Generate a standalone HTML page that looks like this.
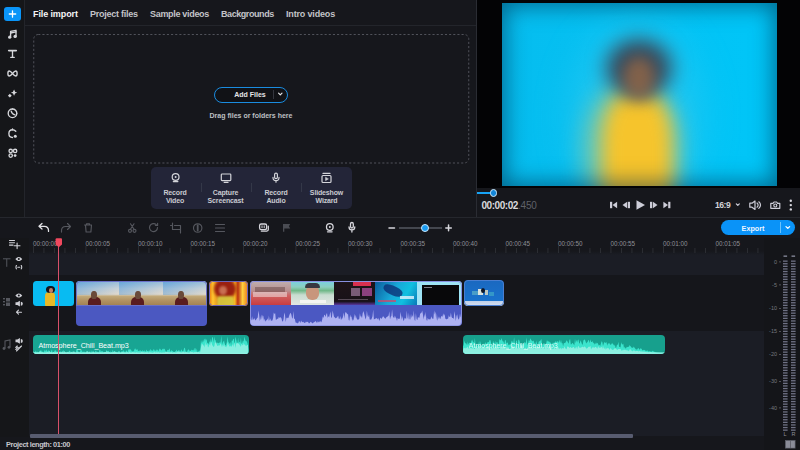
<!DOCTYPE html>
<html><head><meta charset="utf-8">
<style>
*{margin:0;padding:0;box-sizing:border-box}
html,body{width:800px;height:450px;overflow:hidden;background:#16171c;font-family:"Liberation Sans",sans-serif;color:#d8d8da}
.a{position:absolute}
svg{position:absolute;overflow:visible}
.tab{position:absolute;top:9px;font-size:9px;font-weight:bold;color:#c3c4c8;white-space:nowrap}
.rec{position:absolute;top:188.5px;font-size:7px;color:#c9cad0;text-align:center;line-height:8px;width:50px;font-weight:bold;letter-spacing:-0.15px}
.rl{position:absolute;top:240px;font-size:6.3px;color:#8e9098;white-space:nowrap}
.db{position:absolute;font-size:5.5px;color:#76787f;width:14px;text-align:right;left:763px}
</style></head><body>

<div class="a" style="left:0;top:0;width:24px;height:217px;background:#151619"></div>
<div class="a" style="left:24px;top:0;width:1px;height:217px;background:#23252b"></div>
<div class="a" style="left:4px;top:7px;width:17px;height:14px;border-radius:3px;background:#0a95f8"></div>
<svg style="left:0;top:0" width="25" height="217">
<g stroke="#fff" stroke-width="1.3" fill="none" stroke-linecap="round"><path d="M12.5 10.8v6.4M9.3 14h6.4"/></g>
<g fill="none" stroke="#d6d7db" stroke-width="1.35" stroke-linecap="round" stroke-linejoin="round">
 <path d="M10.6 37.2V31.4l5.4-1.1v6.2"/><path d="M10.6 33l5.4-1.1"/>
 <path d="M8.7 50.6h7.6" stroke-width="1.6"/><path d="M12.5 50.6v6.8M10.8 57.4h3.4"/>
 <path d="M12.5 73.5c-1.3-1.6-2.4-2.5-3.2-2.5-.9 0-1.4 1-1.4 2.5s.5 2.5 1.4 2.5c.8 0 1.9-.9 3.2-2.5c1.3-1.6 2.4-2.5 3.2-2.5.9 0 1.4 1 1.4 2.5s-.5 2.5-1.4 2.5c-.8 0-1.9-.9-3.2-2.5z"/>
 <path d="M16.8 113.3a4.3 4.3 0 1 1-4.3-4.3"/><path d="M12.5 109c2.3 0 4.3 2 4.3 4.3"/><path d="M11.2 111.2c.4 2 1.8 3.3 3.8 3.6"/>
 <path d="M15.8 131.3c-.9-1-2-1.6-3.3-1.6-2.3 0-3.6 1.8-3.6 3.9s1.3 3.9 3.6 3.9"/><path d="M12.5 129.7v-.8"/>
 <circle cx="10.7" cy="150.9" r="1.7"/><circle cx="15.1" cy="150.9" r="1.7"/><circle cx="10.7" cy="155.6" r="1.7"/>
</g>
<g fill="#d6d7db">
 <circle cx="9.7" cy="37.2" r="1.6"/><circle cx="15.1" cy="36.4" r="1.6"/>
 <path d="M14.06 89.4Q14.5 92.1 17.2 92.56Q14.5 93 14.06 95.7Q13.6 93 10.9 92.56Q13.6 92.1 14.06 89.4z"/>
 <path d="M9.84 93.8l1.9 1.9-1.9 1.9-1.9-1.9z"/>
 <circle cx="15.3" cy="136.2" r="1.5"/><circle cx="15.1" cy="155.6" r="1.4"/>
</g>
</svg>
<div class="a" style="left:25px;top:25px;width:451px;height:1px;background:#23252b"></div>
<div class="tab" style="left:33px;color:#f4f4f6;letter-spacing:-0.11px">File import</div>
<div class="tab" style="left:90px;letter-spacing:-0.25px">Project files</div>
<div class="tab" style="left:150px;letter-spacing:-0.31px">Sample videos</div>
<div class="tab" style="left:221px;letter-spacing:-0.43px">Backgrounds</div>
<div class="tab" style="left:286px;letter-spacing:-0.17px">Intro videos</div>
<svg style="left:0;top:0" width="1" height="1"><rect x="33.75" y="34.5" width="435" height="128.5" rx="4.5" fill="none" stroke="#50525a" stroke-width="1" stroke-dasharray="2.1 2.05"/></svg>
<div class="a" style="left:214px;top:87px;width:74px;height:15.5px;border:1.8px solid #1a8ce0;border-radius:8px;background:#111216"></div>
<div class="a" style="left:221px;top:90.6px;width:58px;font-size:7px;font-weight:bold;color:#e6e6e8;text-align:center">Add Files</div>
<div class="a" style="left:273px;top:90px;width:1px;height:9px;background:#34363e"></div>
<svg style="left:0;top:0" width="1" height="1"><path d="M278.6 93.2l1.7 1.7 1.7-1.7" fill="none" stroke="#e6e6e8" stroke-width="1.2" stroke-linecap="round" stroke-linejoin="round"/></svg>
<div class="a" style="left:195px;top:112px;width:112px;font-size:7px;font-weight:bold;color:#bfc0c4;text-align:center">Drag files or folders here</div>
<div class="a" style="left:150.5px;top:166.8px;width:201.5px;height:42px;border-radius:5px;background:#232538"></div>
<div class="a" style="left:201px;top:183px;width:1px;height:9px;background:#343848"></div>
<div class="a" style="left:251px;top:183px;width:1px;height:9px;background:#343848"></div>
<div class="a" style="left:301px;top:183px;width:1px;height:9px;background:#343848"></div>
<div class="rec" style="left:150px">Record<br>Video</div>
<div class="rec" style="left:200.5px">Capture<br>Screencast</div>
<div class="rec" style="left:251px">Record<br>Audio</div>
<div class="rec" style="left:301.5px">Slideshow<br>Wizard</div>
<svg style="left:0;top:0" width="1" height="1"><g fill="none" stroke="#d4d5da" stroke-width="1.2" stroke-linecap="round" stroke-linejoin="round">
<circle cx="175.6" cy="177" r="3.4"/><path d="M173.3 181.6h4.6"/>
<rect x="221.3" y="174" width="9.5" height="6.6" rx="0.8"/><path d="M224.2 182.4h3.8"/>
<rect x="274.6" y="173.2" width="2.8" height="5.4" rx="1.4"/><path d="M273 177.4c0 2 1.4 3.2 3 3.2s3-1.2 3-3.2M276 180.6v1.6"/>
<rect x="322" y="175.5" width="9" height="7" rx="1"/><path d="M323 173.4h7"/><path d="M325.6 177.6v3l2.5-1.5z" fill="#d4d5da" stroke-width="0.6"/>
</g><circle cx="175.6" cy="177" r="1" fill="#d4d5da"/></svg>
<div class="a" style="left:476px;top:0;width:1px;height:217px;background:#2a2c33"></div>
<div class="a" style="left:477px;top:0;width:323px;height:188px;background:#030305"></div>
<div class="a" style="left:502px;top:3px;width:275px;height:183px;overflow:hidden;background:#03b9ec">
 <div class="a" style="left:0;top:0;width:275px;height:183px;background:linear-gradient(90deg,#06bdef 0%,#04c0f2 35%,#02c3f5 65%,#00c6f8 100%)"></div>
 <div class="a" style="left:70px;top:20px;width:130px;height:190px;border-radius:50%;background:#30c8f0;filter:blur(18px);opacity:.6"></div>
 <div class="a" style="left:80px;top:80px;width:100px;height:140px;border-radius:45%;background:#78c8a8;filter:blur(11px);opacity:.85"></div>
 <div class="a" style="left:100px;top:88px;width:70px;height:125px;border-radius:40% 40% 30% 30%;background:#f6c42c;filter:blur(9px)"></div>
 <div class="a" style="left:104px;top:36px;width:66px;height:58px;border-radius:50%;background:#38485a;filter:blur(10px)"></div>
 <div class="a" style="left:121px;top:54px;width:32px;height:42px;border-radius:50%;background:#8a6448;filter:blur(7px);opacity:.9"></div>
 <div class="a" style="left:0;top:0;width:275px;height:183px;box-shadow:inset 0 0 22px 3px rgba(0,45,75,.6)"></div>
</div>
<div class="a" style="left:477px;top:191.8px;width:16px;height:2px;background:#17a3f5"></div>
<div class="a" style="left:489.7px;top:189px;width:7.5px;height:7.5px;border-radius:50%;background:#1487d9;border:1.3px solid #cfe9fb"></div>
<div class="a" style="left:481.5px;top:199.5px;font-size:10px;font-weight:bold;color:#d9d9dd;letter-spacing:-0.45px">00:00:02<span style="color:#5f6168;font-weight:normal;letter-spacing:-0.2px">.450</span></div>
<svg style="left:0;top:0" width="1" height="1"><g fill="#cdcdd8">
<rect x="610" y="201.8" width="2.2" height="6.4"/><path d="M612.5 205l4.6-3.2v6.4z"/>
<path d="M622.5 205l4.6-3.2v6.4z"/><rect x="627.8" y="201.8" width="2.2" height="6.4"/>
<path d="M636.5 200.3l8.5 4.7-8.5 4.7z"/>
<rect x="650" y="201.8" width="2.2" height="6.4"/><path d="M657.5 205l-4.6-3.2v6.4z"/>
<path d="M668 205l-4.6-3.2v6.4z"/><rect x="668.2" y="201.8" width="2.2" height="6.4"/>
</g>
<g fill="none" stroke="#cdcdd8" stroke-width="1.2" stroke-linecap="round" stroke-linejoin="round">
<path d="M736.3 203.8l1.5 1.5 1.5-1.5"/>
<path d="M749.8 203.2h2.2l3-2.2v8.4l-3-2.2h-2.2z"/><path d="M757 203c.8.6 1.1 1.3 1.1 2.1s-.3 1.5-1.1 2.1M758.8 201.8c1.2 1 1.7 2.1 1.7 3.3s-.5 2.3-1.7 3.3"/>
<path d="M770.8 203.3h2.2l1-1.3h2.6l1 1.3h2.2v5h-9z"/><circle cx="775.3" cy="205.5" r="1.5"/>
</g>
<g fill="#d8d8e0"><circle cx="790.8" cy="200.8" r="1.2"/><circle cx="790.8" cy="205.1" r="1.2"/><circle cx="790.8" cy="209.4" r="1.2"/></g>
</svg>
<div class="a" style="left:715px;top:200.3px;font-size:8.6px;font-weight:bold;color:#d2d2d8;letter-spacing:-0.5px">16:9</div>
<div class="a" style="left:0;top:217px;width:800px;height:1px;background:#25272d"></div>
<svg style="left:0;top:0" width="1" height="1"><g fill="none" stroke-width="1.3" stroke-linecap="round" stroke-linejoin="round">
<g stroke="#e2e2e6"><path d="M39 226.3l3-2.8M39 226.3l3 2.8M39.5 226.3h4.8c2.5 0 4.2 1.8 4.2 4.3v.8"/></g>
<g stroke="#55575e" stroke-width="1.15"><path d="M70.5 226.5l-3-3M70.5 226.5l-3 3M70 226.5h-4.5c-2.5 0-4 1.8-4 4.3v1.3"/>
<path d="M84.5 225h7M86.5 225v-1.3h3v1.3M85.5 225l.6 7h4.8l.6-7"/>
<circle cx="130" cy="230.8" r="1.5"/><circle cx="134.5" cy="230.8" r="1.5"/><path d="M130.5 229.3l3.5-5.5M134 229.3l-3.5-5.5"/>
<path d="M157.5 227.5a4 4 0 1 1-1.2-2.8M157.6 223.3v2.2h-2.2"/>
<path d="M172.5 223v6.5h8M174.5 225.5h6v7M170.5 225.5h2M180.5 231.5v1.5"/>
<circle cx="197.7" cy="228" r="4.2"/><path d="M197.7 225.5v5" stroke-width="1.8"/>
<path d="M215.5 224.5h9M215.5 228h9M215.5 231.5h9"/>

</g>
<g stroke="#d6d6dc"><rect x="259.6" y="224" width="7" height="5.6" rx="1.6"/><path d="M268.3 226.2v3.4c0 .9-.6 1.5-1.5 1.5h-5.5"/><path d="M262 225.8v2M264.2 225.8v2" stroke-width="1"/>
<circle cx="329.8" cy="227" r="3.3"/><path d="M327.5 231.8h4.6"/>
<rect x="350.5" y="222.5" width="2.8" height="5.5" rx="1.4"/><path d="M349 226.8c0 2 1.3 3.2 2.9 3.2s2.9-1.2 2.9-3.2M351.9 230v2"/>
<path d="M389 227.9h5.5M445.8 227.9h5.5M448.55 225.1v5.6" stroke-width="1.5"/>
</g></g>
<circle cx="329.8" cy="227" r="1" fill="#d6d6dc"/><path d="M283 224h7.2l-1.3 2.2 1.3 2.2H284.3v3.3H283z" fill="#4a4c53"/>
</svg>
<div class="a" style="left:398.5px;top:227.2px;width:43.5px;height:1.4px;background:#44474f"></div>

<div class="a" style="left:421px;top:224px;width:8px;height:8px;border-radius:50%;background:#1a9cf2;border:1.4px solid #cde8fb"></div>
<div class="a" style="left:720.5px;top:219.8px;width:74px;height:15.2px;border-radius:8px;background:#0a93f8"></div>
<div class="a" style="left:780px;top:222px;width:1px;height:11px;background:#6cc3fb"></div>
<div class="a" style="left:722px;top:223.8px;width:62px;font-size:7.2px;font-weight:bold;color:#eef6ff;text-align:center">Export</div>
<svg style="left:0;top:0" width="1" height="1"><path d="M786 226.6l1.8 1.8 1.8-1.8" fill="none" stroke="#fff" stroke-width="1.3" stroke-linecap="round" stroke-linejoin="round"/></svg>
<div class="a" style="left:0;top:238px;width:29px;height:199px;background:#151619"></div>
<div class="a" style="left:29px;top:251px;width:734.5px;height:4px;background:linear-gradient(#16171c,#1b1d25)"></div>
<div class="a" style="left:29px;top:255px;width:734.5px;height:19.5px;background:#1b1d25"></div>
<div class="a" style="left:29px;top:274.5px;width:734.5px;height:56.5px;background:#15161b"></div>
<div class="a" style="left:29px;top:331px;width:734.5px;height:105px;background:#1b1d25"></div>
<svg style="left:0;top:0" width="1" height="1"><g fill="#2e3036"><rect x="33.0" y="246" width="0.9" height="7"/><rect x="43.5" y="248" width="0.9" height="5"/><rect x="54.0" y="248" width="0.9" height="5"/><rect x="64.5" y="248" width="0.9" height="5"/><rect x="75.0" y="248" width="0.9" height="5"/><rect x="85.5" y="246" width="0.9" height="7"/><rect x="96.0" y="248" width="0.9" height="5"/><rect x="106.5" y="248" width="0.9" height="5"/><rect x="117.0" y="248" width="0.9" height="5"/><rect x="127.5" y="248" width="0.9" height="5"/><rect x="138.0" y="246" width="0.9" height="7"/><rect x="148.5" y="248" width="0.9" height="5"/><rect x="159.0" y="248" width="0.9" height="5"/><rect x="169.5" y="248" width="0.9" height="5"/><rect x="180.0" y="248" width="0.9" height="5"/><rect x="190.5" y="246" width="0.9" height="7"/><rect x="201.0" y="248" width="0.9" height="5"/><rect x="211.5" y="248" width="0.9" height="5"/><rect x="222.0" y="248" width="0.9" height="5"/><rect x="232.5" y="248" width="0.9" height="5"/><rect x="243.0" y="246" width="0.9" height="7"/><rect x="253.5" y="248" width="0.9" height="5"/><rect x="264.0" y="248" width="0.9" height="5"/><rect x="274.5" y="248" width="0.9" height="5"/><rect x="285.0" y="248" width="0.9" height="5"/><rect x="295.5" y="246" width="0.9" height="7"/><rect x="306.0" y="248" width="0.9" height="5"/><rect x="316.5" y="248" width="0.9" height="5"/><rect x="327.0" y="248" width="0.9" height="5"/><rect x="337.5" y="248" width="0.9" height="5"/><rect x="348.0" y="246" width="0.9" height="7"/><rect x="358.5" y="248" width="0.9" height="5"/><rect x="369.0" y="248" width="0.9" height="5"/><rect x="379.5" y="248" width="0.9" height="5"/><rect x="390.0" y="248" width="0.9" height="5"/><rect x="400.5" y="246" width="0.9" height="7"/><rect x="411.0" y="248" width="0.9" height="5"/><rect x="421.5" y="248" width="0.9" height="5"/><rect x="432.0" y="248" width="0.9" height="5"/><rect x="442.5" y="248" width="0.9" height="5"/><rect x="453.0" y="246" width="0.9" height="7"/><rect x="463.5" y="248" width="0.9" height="5"/><rect x="474.0" y="248" width="0.9" height="5"/><rect x="484.5" y="248" width="0.9" height="5"/><rect x="495.0" y="248" width="0.9" height="5"/><rect x="505.5" y="246" width="0.9" height="7"/><rect x="516.0" y="248" width="0.9" height="5"/><rect x="526.5" y="248" width="0.9" height="5"/><rect x="537.0" y="248" width="0.9" height="5"/><rect x="547.5" y="248" width="0.9" height="5"/><rect x="558.0" y="246" width="0.9" height="7"/><rect x="568.5" y="248" width="0.9" height="5"/><rect x="579.0" y="248" width="0.9" height="5"/><rect x="589.5" y="248" width="0.9" height="5"/><rect x="600.0" y="248" width="0.9" height="5"/><rect x="610.5" y="246" width="0.9" height="7"/><rect x="621.0" y="248" width="0.9" height="5"/><rect x="631.5" y="248" width="0.9" height="5"/><rect x="642.0" y="248" width="0.9" height="5"/><rect x="652.5" y="248" width="0.9" height="5"/><rect x="663.0" y="246" width="0.9" height="7"/><rect x="673.5" y="248" width="0.9" height="5"/><rect x="684.0" y="248" width="0.9" height="5"/><rect x="694.5" y="248" width="0.9" height="5"/><rect x="705.0" y="248" width="0.9" height="5"/><rect x="715.5" y="246" width="0.9" height="7"/><rect x="726.0" y="248" width="0.9" height="5"/><rect x="736.5" y="248" width="0.9" height="5"/><rect x="747.0" y="248" width="0.9" height="5"/><rect x="757.5" y="248" width="0.9" height="5"/></g></svg>
<div class="rl" style="left:33.0px">00:00:00</div>
<div class="rl" style="left:85.5px">00:00:05</div>
<div class="rl" style="left:138.0px">00:00:10</div>
<div class="rl" style="left:190.5px">00:00:15</div>
<div class="rl" style="left:243.0px">00:00:20</div>
<div class="rl" style="left:295.5px">00:00:25</div>
<div class="rl" style="left:348.0px">00:00:30</div>
<div class="rl" style="left:400.5px">00:00:35</div>
<div class="rl" style="left:453.0px">00:00:40</div>
<div class="rl" style="left:505.5px">00:00:45</div>
<div class="rl" style="left:558.0px">00:00:50</div>
<div class="rl" style="left:610.5px">00:00:55</div>
<div class="rl" style="left:663.0px">00:01:00</div>
<div class="rl" style="left:715.5px">00:01:05</div>
<svg style="left:0;top:0" width="1" height="1"><g fill="none" stroke="#d4d4da" stroke-width="1.1" stroke-linecap="round">
<path d="M9.5 240.5h5M9.5 242.8h5M9.5 245.1h3.5M14.2 245.8h5.8M17.1 243v5.6"/>
</g>
<g fill="none" stroke="#55575e" stroke-width="1"><path d="M3 258.8h7.5M6.75 258.8v8"/></g>
<g fill="none" stroke="#cfd0d6" stroke-width="1.1" stroke-linecap="round" stroke-linejoin="round">

<path d="M16.5 265.5c-.7.6-.7 2.8 0 3.4M21.2 265.5c.7.6.7 2.8 0 3.4M17.8 267.2h2"/>

<path d="M21.5 312.2h-5M16.5 312.2l2-2M16.5 312.2l2 2"/>
</g>
<g fill="#cfd0d6">
<path d="M15.5 302.2h1.8l2.6-1.4v5.6l-2.6-1.4h-1.8z"/><path d="M20.8 301.8a2 2 0 0 1 0 4"/>
<path d="M15.5 339.5h1.8l2.6-1.4v5.6l-2.6-1.4h-1.8z"/><path d="M20.8 339.1a2 2 0 0 1 0 4"/>
<path d="M15.4 259c1.1-1.4 2.2-2.1 3.4-2.1s2.3.7 3.4 2.1c-1.1 1.4-2.2 2.1-3.4 2.1s-2.3-.7-3.4-2.1z"/><path d="M15.4 295.5c1.1-1.4 2.2-2.1 3.4-2.1s2.3.7 3.4 2.1c-1.1 1.4-2.2 2.1-3.4 2.1s-2.3-.7-3.4-2.1z"/>
<circle cx="18.8" cy="295.5" r="1" fill="#131418"/><circle cx="18.8" cy="259" r="1" fill="#131418"/>
</g>
<g fill="none" stroke="#cfd0d6" stroke-width="1.1" stroke-linecap="round"><path d="M15.8 349.5l2-2 1 1 2-2M16.5 351l5-5M15.8 347.5l1.5-1.5"/></g>
<g fill="#55575e">
<rect x="3" y="298" width="2" height="1.4"/><rect x="3" y="301" width="2" height="1.4"/><rect x="3" y="304" width="2" height="1.4"/>
<rect x="6" y="298" width="4" height="3.5"/><rect x="6" y="302.5" width="4" height="3.5"/>
</g>
<g fill="none" stroke="#55575e" stroke-width="1.1"><path d="M5 348.5V341l5-1v7"/></g>
<g fill="#55575e"><circle cx="4" cy="348.5" r="1.4"/><circle cx="9" cy="347.3" r="1.4"/></g>
</svg>
<div class="a" style="left:33px;top:280.5px;width:41px;height:25.5px;border-radius:3.5px;background:#08bbf2;overflow:hidden">
<div class="a" style="left:12px;top:11.5px;width:10px;height:14px;border-radius:4px 4px 1px 1px;background:#e8b828"></div>
<div class="a" style="left:13px;top:5px;width:8.5px;height:7.5px;border-radius:50%;background:#15141c"></div>
<div class="a" style="left:15.5px;top:7.5px;width:4px;height:4.5px;border-radius:50%;background:#c0806a"></div>
</div>
<div class="a" style="left:75.5px;top:280.5px;width:131px;height:45.5px;border-radius:4px;background:#4b58c1;overflow:hidden">
<div class="a" style="left:0.0px;top:0;width:43.8px;height:25px;overflow:hidden;background:linear-gradient(#6aa8d8 0%,#b8cad8 30%,#dcd4c8 52%,#c0a878 62%,#b09060 80%,#a08050 100%)">
<div class="a" style="left:0;top:0;width:43.8px;height:14px;background:linear-gradient(90deg,rgba(90,160,220,.45),rgba(230,225,215,.35))"></div>
<div class="a" style="left:12px;top:16.5px;width:13px;height:9px;border-radius:5px 5px 0 0;background:#5a1c1e"></div>
<div class="a" style="left:15.5px;top:10.5px;width:6px;height:8px;border-radius:45%;background:#6a4a3a"></div></div>
<div class="a" style="left:43.7px;top:0;width:43.8px;height:25px;overflow:hidden;background:linear-gradient(#6aa8d8 0%,#b8cad8 30%,#dcd4c8 52%,#c0a878 62%,#b09060 80%,#a08050 100%)">
<div class="a" style="left:0;top:0;width:43.8px;height:14px;background:linear-gradient(90deg,rgba(90,160,220,.45),rgba(230,225,215,.35))"></div>
<div class="a" style="left:12px;top:16.5px;width:13px;height:9px;border-radius:5px 5px 0 0;background:#5a1c1e"></div>
<div class="a" style="left:15.5px;top:10.5px;width:6px;height:8px;border-radius:45%;background:#6a4a3a"></div></div>
<div class="a" style="left:87.4px;top:0;width:43.8px;height:25px;overflow:hidden;background:linear-gradient(#6aa8d8 0%,#b8cad8 30%,#dcd4c8 52%,#c0a878 62%,#b09060 80%,#a08050 100%)">
<div class="a" style="left:0;top:0;width:43.8px;height:14px;background:linear-gradient(90deg,rgba(90,160,220,.45),rgba(230,225,215,.35))"></div>
<div class="a" style="left:12px;top:16.5px;width:13px;height:9px;border-radius:5px 5px 0 0;background:#5a1c1e"></div>
<div class="a" style="left:15.5px;top:10.5px;width:6px;height:8px;border-radius:45%;background:#6a4a3a"></div></div>
<div class="a" style="left:0;top:0;width:131px;height:25px;border:1px solid #6a70c8;border-radius:4px 4px 0 0"></div>
</div>
<div class="a" style="left:208.5px;top:280.5px;width:39.5px;height:25.5px;border-radius:3.5px;overflow:hidden;background:linear-gradient(90deg,#e87010 0%,#ffc830 10%,#f0a020 18%,#b82c10 30%,#d86018 55%,#ffb820 66%,#b83010 74%,#ffd040 86%,#e87818 100%)">
<div class="a" style="left:5px;top:-2px;width:22px;height:20px;border-radius:50%;background:#9a2010;filter:blur(1.5px)"></div>
<div class="a" style="left:10px;top:5px;width:8px;height:9px;border-radius:50%;background:#d88868;opacity:.75;filter:blur(1px)"></div>
<div class="a" style="left:8px;top:15px;width:17px;height:11px;border-radius:3px 3px 0 0;background:#d8d040;opacity:.9;filter:blur(0.8px)"></div>
<div class="a" style="left:0;top:0;width:39.5px;height:25.5px;border:1px solid #6a62b8;border-radius:3.5px"></div>
</div>
<div class="a" style="left:250px;top:281px;width:211.5px;height:45px;border-radius:4px;background:#4b58c2;overflow:hidden">
<div class="a" style="left:0px;top:0;width:41px;height:23.5px;background:linear-gradient(#c0b0b0 0%,#b89090 40%,#d06060 62%,#c83c40 100%)"></div>
<div class="a" style="left:41px;top:0;width:43px;height:23.5px;background:linear-gradient(#78d0e4 0%,#8ccfc0 25%,#70b888 40%,#c8dcd0 58%,#e0e6e2 100%)"></div>
<div class="a" style="left:84px;top:0;width:41px;height:23.5px;background:linear-gradient(#1e1418 0%,#181218 85%,#5a38a0 100%)"></div>
<div class="a" style="left:125px;top:0;width:42px;height:23.5px;background:linear-gradient(120deg,#0a5a9a 0%,#18a8d8 45%,#10c0e0 70%,#0878b8 100%)"></div>
<div class="a" style="left:167px;top:0;width:44.5px;height:23.5px;background:#9ee4f6"></div>
<div class="a" style="left:3px;top:11px;width:34px;height:5px;background:#f0e0e0;opacity:.55"></div>
<div class="a" style="left:5px;top:6px;width:30px;height:5px;background:#402020;opacity:.35"></div>
<div class="a" style="left:56px;top:4px;width:13px;height:15px;border-radius:6px;background:#c8967c"></div>
<div class="a" style="left:55px;top:2px;width:15px;height:5px;border-radius:6px 6px 1px 1px;background:#383840"></div>
<div class="a" style="left:50px;top:19px;width:26px;height:3px;background:#f8f8f4;opacity:.85"></div>
<div class="a" style="left:103px;top:1px;width:18px;height:4px;background:#d83050"></div>
<div class="a" style="left:101px;top:7px;width:9px;height:8px;background:#8a6a88;opacity:.85"></div>
<div class="a" style="left:112px;top:7px;width:10px;height:8px;background:#a04a90;opacity:.85"></div>
<div class="a" style="left:88px;top:18px;width:30px;height:1px;background:#807080;opacity:.6"></div>
<div class="a" style="left:133px;top:5px;width:20px;height:9px;border-radius:40%;background:#0c2a70;opacity:.75;transform:rotate(25deg)"></div>
<div class="a" style="left:150px;top:15px;width:14px;height:3px;background:#e0f4ff;opacity:.8"></div>
<div class="a" style="left:128px;top:19px;width:18px;height:2px;background:#e04060;opacity:.7"></div>
<div class="a" style="left:171.5px;top:4px;width:37px;height:19.5px;background:#08080a"></div>
<div class="a" style="left:173.5px;top:6px;width:8px;height:1px;background:#808088"></div>
</div>
<div class="a" style="left:250px;top:281px;width:211.5px;height:45px;border:1px solid #8890e0;border-radius:4px"></div>
<svg style="left:0;top:0" width="1" height="1"><clipPath id="c4"><rect x="250.5" y="281" width="210.5" height="44.5" rx="3.5"/></clipPath><g clip-path="url(#c4)"><path d="M250.0 325.5 L250.0 319.0 L250.7 319.0 L251.4 320.5 L252.1 316.3 L252.8 319.9 L253.5 319.5 L254.2 317.9 L254.9 319.6 L255.6 320.5 L256.3 319.2 L257.0 318.2 L257.7 317.6 L258.4 310.6 L259.1 314.4 L259.8 321.1 L260.5 318.7 L261.2 314.5 L261.9 319.4 L262.6 315.2 L263.3 316.1 L264.0 321.1 L264.7 318.5 L265.4 321.7 L266.1 320.4 L266.8 320.1 L267.5 318.2 L268.2 321.0 L268.9 315.6 L269.6 320.7 L270.3 318.3 L271.0 321.0 L271.7 320.6 L272.4 320.5 L273.1 318.1 L273.8 312.5 L274.5 313.9 L275.2 313.2 L275.9 319.9 L276.6 319.4 L277.3 318.5 L278.0 319.2 L278.7 317.1 L279.4 317.8 L280.1 317.5 L280.8 317.3 L281.5 318.4 L282.2 321.3 L282.9 321.5 L283.6 318.9 L284.3 312.6 L285.0 314.9 L285.7 321.9 L286.4 318.0 L287.1 317.4 L287.8 318.2 L288.5 317.8 L289.2 315.6 L289.9 313.7 L290.6 312.7 L291.3 314.5 L292.0 317.8 L292.7 318.7 L293.4 310.9 L294.1 319.0 L294.8 318.6 L295.5 322.3 L296.2 322.9 L296.9 322.4 L297.6 323.6 L298.3 322.9 L299.0 320.9 L299.7 321.4 L300.4 323.1 L301.1 320.6 L301.8 321.8 L302.5 322.2 L303.2 321.7 L303.9 322.5 L304.6 323.1 L305.3 322.8 L306.0 321.6 L306.7 322.2 L307.4 321.8 L308.1 322.0 L308.8 323.2 L309.5 323.3 L310.2 322.3 L310.9 321.7 L311.6 322.4 L312.3 323.6 L313.0 322.8 L313.7 322.6 L314.4 321.9 L315.1 321.4 L315.8 321.0 L316.5 322.5 L317.2 322.7 L317.9 321.1 L318.6 322.5 L319.3 321.3 L320.0 322.5 L320.7 320.7 L321.4 322.4 L322.1 320.1 L322.8 316.5 L323.5 318.0 L324.2 314.7 L324.9 314.9 L325.6 316.9 L326.3 314.2 L327.0 313.0 L327.7 318.0 L328.4 316.1 L329.1 317.6 L329.8 314.2 L330.5 311.6 L331.2 317.8 L331.9 317.6 L332.6 310.5 L333.3 313.6 L334.0 316.7 L334.7 317.2 L335.4 318.5 L336.1 317.4 L336.8 318.0 L337.5 316.4 L338.2 315.8 L338.9 319.0 L339.6 318.7 L340.3 315.9 L341.0 320.3 L341.7 318.6 L342.4 318.5 L343.1 315.9 L343.8 312.6 L344.5 318.8 L345.2 312.4 L345.9 312.3 L346.6 312.9 L347.3 314.5 L348.0 313.4 L348.7 320.1 L349.4 320.7 L350.1 314.6 L350.8 316.9 L351.5 316.6 L352.2 321.1 L352.9 318.9 L353.6 320.5 L354.3 313.5 L355.0 318.6 L355.7 314.8 L356.4 317.8 L357.1 319.3 L357.8 319.8 L358.5 319.5 L359.2 319.0 L359.9 313.2 L360.6 316.6 L361.3 316.3 L362.0 318.2 L362.7 313.3 L363.4 311.0 L364.1 313.6 L364.8 316.2 L365.5 319.4 L366.2 317.2 L366.9 310.6 L367.6 315.7 L368.3 317.2 L369.0 314.6 L369.7 319.6 L370.4 319.6 L371.1 319.8 L371.8 318.3 L372.5 316.3 L373.2 309.6 L373.9 319.6 L374.6 319.0 L375.3 318.9 L376.0 317.8 L376.7 318.3 L377.4 319.4 L378.1 317.7 L378.8 319.4 L379.5 320.9 L380.2 317.5 L380.9 318.5 L381.6 318.7 L382.3 317.5 L383.0 316.3 L383.7 316.7 L384.4 317.7 L385.1 318.4 L385.8 318.5 L386.5 316.9 L387.2 317.1 L387.9 316.0 L388.6 315.7 L389.3 311.3 L390.0 319.5 L390.7 316.8 L391.4 316.0 L392.1 309.2 L392.8 316.3 L393.5 317.4 L394.2 318.0 L394.9 315.5 L395.6 317.5 L396.3 318.3 L397.0 320.9 L397.7 317.7 L398.4 319.1 L399.1 318.4 L399.8 318.9 L400.5 311.8 L401.2 316.0 L401.9 319.7 L402.6 316.1 L403.3 320.7 L404.0 320.4 L404.7 317.8 L405.4 318.2 L406.1 319.2 L406.8 310.4 L407.5 317.4 L408.2 319.4 L408.9 312.8 L409.6 319.2 L410.3 319.5 L411.0 313.7 L411.7 318.0 L412.4 315.0 L413.1 317.4 L413.8 310.2 L414.5 319.7 L415.2 321.0 L415.9 313.1 L416.6 319.1 L417.3 320.2 L418.0 316.8 L418.7 317.7 L419.4 317.7 L420.1 314.1 L420.8 312.9 L421.5 312.7 L422.2 310.4 L422.9 314.3 L423.6 319.4 L424.3 314.0 L425.0 317.5 L425.7 311.8 L426.4 319.4 L427.1 320.9 L427.8 317.8 L428.5 319.5 L429.2 318.9 L429.9 319.8 L430.6 319.0 L431.3 316.3 L432.0 318.3 L432.7 318.8 L433.4 318.7 L434.1 310.2 L434.8 314.5 L435.5 311.6 L436.2 320.0 L436.9 313.2 L437.6 320.7 L438.3 318.4 L439.0 316.2 L439.7 318.4 L440.4 319.0 L441.1 316.3 L441.8 316.2 L442.5 316.7 L443.2 313.3 L443.9 315.7 L444.6 314.1 L445.3 318.4 L446.0 319.2 L446.7 319.3 L447.4 318.7 L448.1 318.7 L448.8 315.2 L449.5 317.0 L450.2 317.1 L450.9 312.4 L451.6 317.0 L452.3 317.9 L453.0 318.1 L453.7 319.0 L454.4 310.9 L455.1 315.2 L455.8 320.9 L456.5 316.1 L457.2 314.2 L457.9 318.0 L458.6 319.7 L459.3 318.3 L460.0 313.4 L460.7 316.9 L461.4 318.0 L461.5 325.5Z" fill="#aeb2f2"/></g></svg>
<div class="a" style="left:463.8px;top:280.4px;width:40.4px;height:25.4px;border-radius:4px;overflow:hidden;background:linear-gradient(#1a68c0 0%,#1a72cc 80%,#c0d0e8 82%,#d8e0f0 100%)">
<div class="a" style="left:8px;top:11px;width:6px;height:4px;background:#60b0c8;opacity:.7"></div>
<div class="a" style="left:14px;top:9px;width:5px;height:6px;background:#f0f0e0;opacity:.9"></div>
<div class="a" style="left:17px;top:8px;width:4px;height:5px;border-radius:50%;background:#101828"></div>
<div class="a" style="left:21px;top:10px;width:3px;height:5px;background:#e8e0c0;opacity:.8"></div>
<div class="a" style="left:25px;top:12px;width:5px;height:4px;background:#40a8c8;opacity:.7"></div>
<div class="a" style="left:0;top:0;width:40.4px;height:25.4px;border:1px solid #4a7ed0;border-radius:4px"></div>
</div>
<div class="a" style="left:33px;top:334.8px;width:215.5px;height:19px;border-radius:4px;background:#18a593;overflow:hidden">
<svg style="left:0;top:0" width="216" height="20">
<path d="M0.0 19.0 L0.0 17.2 L0.7 16.7 L1.4 17.0 L2.1 16.9 L2.8 15.4 L3.5 17.2 L4.2 16.5 L4.9 17.2 L5.6 17.6 L6.3 16.6 L7.0 15.6 L7.7 15.6 L8.4 15.5 L9.1 16.9 L9.8 16.5 L10.5 17.2 L11.2 16.2 L11.9 14.6 L12.6 16.4 L13.3 14.3 L14.0 16.2 L14.7 16.5 L15.4 15.5 L16.1 15.6 L16.8 17.0 L17.5 17.2 L18.2 16.1 L18.9 14.5 L19.6 17.5 L20.3 17.6 L21.0 17.1 L21.7 15.4 L22.4 15.1 L23.1 16.6 L23.8 16.5 L24.5 16.8 L25.2 17.4 L25.9 17.0 L26.6 16.9 L27.3 16.5 L28.0 16.4 L28.7 16.9 L29.4 17.8 L30.1 14.8 L30.8 16.6 L31.5 17.3 L32.2 17.3 L32.9 17.3 L33.6 17.4 L34.3 17.5 L35.0 16.4 L35.7 16.9 L36.4 15.5 L37.1 15.9 L37.8 17.6 L38.5 17.1 L39.2 17.5 L39.9 16.0 L40.6 17.5 L41.3 17.4 L42.0 17.0 L42.7 17.7 L43.4 14.7 L44.1 14.5 L44.8 15.6 L45.5 16.9 L46.2 17.6 L46.9 17.2 L47.6 14.8 L48.3 14.7 L49.0 16.2 L49.7 17.1 L50.4 16.6 L51.1 17.3 L51.8 16.6 L52.5 17.3 L53.2 17.1 L53.9 16.0 L54.6 16.0 L55.3 17.4 L56.0 17.0 L56.7 17.4 L57.4 17.7 L58.1 15.6 L58.8 17.3 L59.5 16.2 L60.2 16.9 L60.9 16.4 L61.6 17.6 L62.3 16.2 L63.0 15.5 L63.7 17.1 L64.4 16.8 L65.1 17.2 L65.8 17.5 L66.5 14.8 L67.2 14.8 L67.9 17.1 L68.6 15.9 L69.3 16.0 L70.0 16.8 L70.7 17.0 L71.4 17.7 L72.1 17.7 L72.8 17.1 L73.5 15.0 L74.2 15.9 L74.9 16.3 L75.6 15.8 L76.3 17.1 L77.0 17.4 L77.7 16.2 L78.4 17.2 L79.1 17.3 L79.8 14.6 L80.5 17.2 L81.2 16.1 L81.9 16.0 L82.6 17.2 L83.3 16.7 L84.0 17.2 L84.7 16.9 L85.4 16.2 L86.1 16.1 L86.8 16.4 L87.5 17.4 L88.2 17.4 L88.9 16.0 L89.6 16.7 L90.3 15.1 L91.0 16.6 L91.7 16.8 L92.4 17.0 L93.1 15.8 L93.8 15.6 L94.5 17.5 L95.2 15.0 L95.9 13.9 L96.6 14.6 L97.3 14.2 L98.0 14.8 L98.7 16.3 L99.4 16.4 L100.1 16.2 L100.8 16.2 L101.5 14.3 L102.2 13.2 L102.9 14.7 L103.6 14.7 L104.3 13.9 L105.0 16.0 L105.7 15.9 L106.4 15.8 L107.1 15.5 L107.8 15.5 L108.5 16.7 L109.2 15.2 L109.9 15.8 L110.6 16.3 L111.3 15.3 L112.0 16.5 L112.7 16.6 L113.4 14.5 L114.1 16.0 L114.8 15.9 L115.5 16.5 L116.2 15.0 L116.9 16.6 L117.6 13.7 L118.3 15.5 L119.0 15.5 L119.7 15.9 L120.4 13.7 L121.1 16.1 L121.8 14.6 L122.5 15.9 L123.2 15.4 L123.9 14.2 L124.6 15.1 L125.3 16.2 L126.0 15.1 L126.7 13.5 L127.4 13.9 L128.1 15.4 L128.8 15.1 L129.5 14.1 L130.2 13.6 L130.9 14.4 L131.6 13.6 L132.3 15.6 L133.0 16.5 L133.7 16.9 L134.4 14.7 L135.1 15.3 L135.8 14.8 L136.5 13.2 L137.2 16.1 L137.9 16.7 L138.6 14.7 L139.3 16.0 L140.0 16.3 L140.7 17.0 L141.4 17.2 L142.1 16.3 L142.8 16.2 L143.5 14.4 L144.2 16.2 L144.9 16.5 L145.6 14.9 L146.3 15.3 L147.0 16.7 L147.7 15.9 L148.4 14.3 L149.1 16.0 L149.8 16.7 L150.5 15.4 L151.2 12.9 L151.9 12.8 L152.6 16.2 L153.3 16.8 L154.0 16.7 L154.7 15.3 L155.4 14.3 L156.1 15.0 L156.8 16.3 L157.5 16.2 L158.2 14.5 L158.9 15.5 L159.6 15.3 L160.3 14.6 L161.0 16.0 L161.7 13.1 L162.4 13.2 L163.1 16.7 L163.8 13.5 L164.5 17.1 L165.2 17.0 L165.9 15.8 L166.6 15.8 L167.3 15.6 L168.0 5.1 L168.7 8.1 L169.4 7.3 L170.1 4.6 L170.8 7.1 L171.5 4.0 L172.2 3.4 L172.9 5.5 L173.6 4.1 L174.3 8.2 L175.0 7.8 L175.7 9.6 L176.4 6.0 L177.1 8.1 L177.8 3.5 L178.5 7.4 L179.2 2.3 L179.9 2.2 L180.6 7.5 L181.3 1.5 L182.0 5.7 L182.7 4.7 L183.4 10.6 L184.1 8.1 L184.8 7.6 L185.5 8.5 L186.2 7.3 L186.9 8.1 L187.6 7.1 L188.3 0.4 L189.0 9.7 L189.7 7.4 L190.4 6.6 L191.1 5.5 L191.8 9.5 L192.5 10.5 L193.2 9.5 L193.9 7.0 L194.6 1.4 L195.3 6.7 L196.0 7.8 L196.7 9.1 L197.4 6.8 L198.1 10.7 L198.8 5.5 L199.5 5.9 L200.2 3.8 L200.9 4.1 L201.6 11.0 L202.3 1.8 L203.0 3.9 L203.7 7.1 L204.4 10.1 L205.1 2.5 L205.8 8.2 L206.5 6.4 L207.2 8.0 L207.9 2.7 L208.6 9.0 L209.3 7.8 L210.0 5.3 L210.7 6.8 L211.4 1.5 L212.1 4.3 L212.8 6.2 L213.5 5.9 L214.2 7.6 L214.9 9.8 L215.5 19.0Z" fill="#3be4cc"/>
<path d="M0.0 19.0 L0.0 17.1 L0.7 16.3 L1.4 17.8 L2.1 17.3 L2.8 17.7 L3.5 17.7 L4.2 17.5 L4.9 17.5 L5.6 17.5 L6.3 17.1 L7.0 16.5 L7.7 16.4 L8.4 17.5 L9.1 16.7 L9.8 17.4 L10.5 17.9 L11.2 17.7 L11.9 17.5 L12.6 17.7 L13.3 17.6 L14.0 17.1 L14.7 17.0 L15.4 17.6 L16.1 16.6 L16.8 16.3 L17.5 17.6 L18.2 17.6 L18.9 17.0 L19.6 17.9 L20.3 16.7 L21.0 17.5 L21.7 17.8 L22.4 17.2 L23.1 17.5 L23.8 17.8 L24.5 16.8 L25.2 17.3 L25.9 17.3 L26.6 16.8 L27.3 17.1 L28.0 17.4 L28.7 17.2 L29.4 16.4 L30.1 16.8 L30.8 17.8 L31.5 16.1 L32.2 17.0 L32.9 17.5 L33.6 17.5 L34.3 17.0 L35.0 17.3 L35.7 17.3 L36.4 17.4 L37.1 17.6 L37.8 17.6 L38.5 16.8 L39.2 17.6 L39.9 16.9 L40.6 16.6 L41.3 16.4 L42.0 17.6 L42.7 17.4 L43.4 17.2 L44.1 17.2 L44.8 17.1 L45.5 17.3 L46.2 17.4 L46.9 17.2 L47.6 17.5 L48.3 17.7 L49.0 18.0 L49.7 17.6 L50.4 17.5 L51.1 17.7 L51.8 17.6 L52.5 17.7 L53.2 17.5 L53.9 16.2 L54.6 16.8 L55.3 17.7 L56.0 16.2 L56.7 16.9 L57.4 17.7 L58.1 17.7 L58.8 17.7 L59.5 17.4 L60.2 16.2 L60.9 17.4 L61.6 17.7 L62.3 17.6 L63.0 17.7 L63.7 17.5 L64.4 17.7 L65.1 16.9 L65.8 17.9 L66.5 17.6 L67.2 17.2 L67.9 17.6 L68.6 17.6 L69.3 17.5 L70.0 17.2 L70.7 17.8 L71.4 17.1 L72.1 17.0 L72.8 17.0 L73.5 16.6 L74.2 16.8 L74.9 17.1 L75.6 17.1 L76.3 16.9 L77.0 17.5 L77.7 17.9 L78.4 17.4 L79.1 16.7 L79.8 17.7 L80.5 16.8 L81.2 16.9 L81.9 16.6 L82.6 17.1 L83.3 17.2 L84.0 17.4 L84.7 17.7 L85.4 17.2 L86.1 17.8 L86.8 17.3 L87.5 17.9 L88.2 17.7 L88.9 16.5 L89.6 17.2 L90.3 17.1 L91.0 17.8 L91.7 17.6 L92.4 17.7 L93.1 17.7 L93.8 16.7 L94.5 17.2 L95.2 18.0 L95.9 17.6 L96.6 16.3 L97.3 17.7 L98.0 17.8 L98.7 17.8 L99.4 16.7 L100.1 17.4 L100.8 17.3 L101.5 17.6 L102.2 18.0 L102.9 17.6 L103.6 17.3 L104.3 17.5 L105.0 18.0 L105.7 17.6 L106.4 17.8 L107.1 17.9 L107.8 17.5 L108.5 16.4 L109.2 16.9 L109.9 17.3 L110.6 17.3 L111.3 17.7 L112.0 17.3 L112.7 17.5 L113.4 17.2 L114.1 17.6 L114.8 17.3 L115.5 18.1 L116.2 17.9 L116.9 16.3 L117.6 18.0 L118.3 17.6 L119.0 18.0 L119.7 17.9 L120.4 18.0 L121.1 16.6 L121.8 17.2 L122.5 17.9 L123.2 16.5 L123.9 18.0 L124.6 17.4 L125.3 17.1 L126.0 17.7 L126.7 18.0 L127.4 17.6 L128.1 17.8 L128.8 18.0 L129.5 17.7 L130.2 17.5 L130.9 17.7 L131.6 17.7 L132.3 17.1 L133.0 16.9 L133.7 16.7 L134.4 16.9 L135.1 16.9 L135.8 17.6 L136.5 17.4 L137.2 17.1 L137.9 18.0 L138.6 16.5 L139.3 17.8 L140.0 18.0 L140.7 17.2 L141.4 17.6 L142.1 17.3 L142.8 17.9 L143.5 17.6 L144.2 16.7 L144.9 16.5 L145.6 16.7 L146.3 16.7 L147.0 17.3 L147.7 17.6 L148.4 17.5 L149.1 17.7 L149.8 16.2 L150.5 16.9 L151.2 16.8 L151.9 18.0 L152.6 16.8 L153.3 17.6 L154.0 17.1 L154.7 17.8 L155.4 17.8 L156.1 17.9 L156.8 17.4 L157.5 16.2 L158.2 17.0 L158.9 17.0 L159.6 17.1 L160.3 18.0 L161.0 17.2 L161.7 17.3 L162.4 17.3 L163.1 16.9 L163.8 16.9 L164.5 17.5 L165.2 16.8 L165.9 17.2 L166.6 17.8 L167.3 16.4 L168.0 12.1 L168.7 9.1 L169.4 9.1 L170.1 10.3 L170.8 10.4 L171.5 12.6 L172.2 6.8 L172.9 10.7 L173.6 9.4 L174.3 8.5 L175.0 12.5 L175.7 11.6 L176.4 9.1 L177.1 10.8 L177.8 6.5 L178.5 7.6 L179.2 10.1 L179.9 11.1 L180.6 12.0 L181.3 11.2 L182.0 7.7 L182.7 7.4 L183.4 7.6 L184.1 10.7 L184.8 10.7 L185.5 10.6 L186.2 10.5 L186.9 10.2 L187.6 8.3 L188.3 9.9 L189.0 12.3 L189.7 9.6 L190.4 11.4 L191.1 8.0 L191.8 11.4 L192.5 11.9 L193.2 10.8 L193.9 12.4 L194.6 7.0 L195.3 9.2 L196.0 10.5 L196.7 11.7 L197.4 10.8 L198.1 12.1 L198.8 11.1 L199.5 8.9 L200.2 11.9 L200.9 9.0 L201.6 7.2 L202.3 12.9 L203.0 8.9 L203.7 8.2 L204.4 7.6 L205.1 9.0 L205.8 8.2 L206.5 9.8 L207.2 10.4 L207.9 12.0 L208.6 8.6 L209.3 9.7 L210.0 10.6 L210.7 7.8 L211.4 9.8 L212.1 9.4 L212.8 10.9 L213.5 10.8 L214.2 10.0 L214.9 9.9 L215.5 19.0Z" fill="#88efe0"/>
<rect x="0" y="17.6" width="216" height="1.4" fill="#90f2e4"/>
</svg>
<div class="a" style="left:5.5px;top:6.6px;font-size:7.2px;color:#ffffff;white-space:nowrap;letter-spacing:-0.05px">Atmosphere_Chill_Beat.mp3</div>
</div>
<div class="a" style="left:463.3px;top:335px;width:202px;height:18.8px;border-radius:4px;background:#17a08d;overflow:hidden">
<svg style="left:0;top:0" width="202" height="20">
<path d="M0.0 18.8 L0.0 11.6 L0.7 10.0 L1.4 5.6 L2.1 8.5 L2.8 7.9 L3.5 9.9 L4.2 6.6 L4.9 10.3 L5.6 8.6 L6.3 8.0 L7.0 7.4 L7.7 8.6 L8.4 6.3 L9.1 4.4 L9.8 6.4 L10.5 7.2 L11.2 8.3 L11.9 3.1 L12.6 10.7 L13.3 10.1 L14.0 8.3 L14.7 11.3 L15.4 9.3 L16.1 6.1 L16.8 10.1 L17.5 5.9 L18.2 11.2 L18.9 10.3 L19.6 9.4 L20.3 8.6 L21.0 10.1 L21.7 8.7 L22.4 7.1 L23.1 9.7 L23.8 8.2 L24.5 7.2 L25.2 7.2 L25.9 7.0 L26.6 5.1 L27.3 4.9 L28.0 7.6 L28.7 10.9 L29.4 10.1 L30.1 5.7 L30.8 7.8 L31.5 8.7 L32.2 5.7 L32.9 9.9 L33.6 6.9 L34.3 7.0 L35.0 8.9 L35.7 9.6 L36.4 4.0 L37.1 5.0 L37.8 5.6 L38.5 3.1 L39.2 5.2 L39.9 6.4 L40.6 6.4 L41.3 9.8 L42.0 4.9 L42.7 5.2 L43.4 9.0 L44.1 7.4 L44.8 7.8 L45.5 10.3 L46.2 9.9 L46.9 9.2 L47.6 9.2 L48.3 6.7 L49.0 5.6 L49.7 7.3 L50.4 7.8 L51.1 2.3 L51.8 8.6 L52.5 9.4 L53.2 5.6 L53.9 5.8 L54.6 11.0 L55.3 4.9 L56.0 4.4 L56.7 6.8 L57.4 9.5 L58.1 8.1 L58.8 10.3 L59.5 8.4 L60.2 9.3 L60.9 8.8 L61.6 6.7 L62.3 8.6 L63.0 6.8 L63.7 2.5 L64.4 10.0 L65.1 8.7 L65.8 4.9 L66.5 6.4 L67.2 3.2 L67.9 4.4 L68.6 5.6 L69.3 6.6 L70.0 5.8 L70.7 5.8 L71.4 8.9 L72.1 6.7 L72.8 10.8 L73.5 5.5 L74.2 9.2 L74.9 10.7 L75.6 6.9 L76.3 5.9 L77.0 6.4 L77.7 4.9 L78.4 4.0 L79.1 10.4 L79.8 9.3 L80.5 8.5 L81.2 8.1 L81.9 9.9 L82.6 9.3 L83.3 8.1 L84.0 5.1 L84.7 6.4 L85.4 5.9 L86.1 7.4 L86.8 6.6 L87.5 7.8 L88.2 8.4 L88.9 10.8 L89.6 7.8 L90.3 8.1 L91.0 7.4 L91.7 7.8 L92.4 6.5 L93.1 6.3 L93.8 7.7 L94.5 6.1 L95.2 6.6 L95.9 8.1 L96.6 4.5 L97.3 7.9 L98.0 4.7 L98.7 8.2 L99.4 8.1 L100.1 11.3 L100.8 8.3 L101.5 8.1 L102.2 8.0 L102.9 6.8 L103.6 5.3 L104.3 6.3 L105.0 7.4 L105.7 8.7 L106.4 5.1 L107.1 4.0 L107.8 9.6 L108.5 9.3 L109.2 8.0 L109.9 8.2 L110.6 9.2 L111.3 10.4 L112.0 3.8 L112.7 8.2 L113.4 4.8 L114.1 7.6 L114.8 4.9 L115.5 4.4 L116.2 8.7 L116.9 7.8 L117.6 5.3 L118.3 7.2 L119.0 9.3 L119.7 9.8 L120.4 5.6 L121.1 4.8 L121.8 4.6 L122.5 6.2 L123.2 8.5 L123.9 7.5 L124.6 7.1 L125.3 4.9 L126.0 5.6 L126.7 8.2 L127.4 4.3 L128.1 7.1 L128.8 6.9 L129.5 5.9 L130.2 8.4 L130.9 7.3 L131.6 9.5 L132.3 9.1 L133.0 7.2 L133.7 8.8 L134.4 7.7 L135.1 9.0 L135.8 10.6 L136.5 9.7 L137.2 11.0 L137.9 8.7 L138.6 6.2 L139.3 7.0 L140.0 10.7 L140.7 8.8 L141.4 7.1 L142.1 7.8 L142.8 7.8 L143.5 6.9 L144.2 10.8 L144.9 8.4 L145.6 8.4 L146.3 8.1 L147.0 9.5 L147.7 9.7 L148.4 9.2 L149.1 7.8 L149.8 9.1 L150.5 9.4 L151.2 10.9 L151.9 9.5 L152.6 13.0 L153.3 12.6 L154.0 9.6 L154.7 10.1 L155.4 6.8 L156.1 11.7 L156.8 12.1 L157.5 12.4 L158.2 7.3 L158.9 9.2 L159.6 9.5 L160.3 8.7 L161.0 13.2 L161.7 11.4 L162.4 13.6 L163.1 13.2 L163.8 11.7 L164.5 12.2 L165.2 11.5 L165.9 12.0 L166.6 10.1 L167.3 11.0 L168.0 11.7 L168.7 12.8 L169.4 12.8 L170.1 12.7 L170.8 11.4 L171.5 12.7 L172.2 13.4 L172.9 14.5 L173.6 14.6 L174.3 14.6 L175.0 13.0 L175.7 13.3 L176.4 15.1 L177.1 13.5 L177.8 13.5 L178.5 13.8 L179.2 15.0 L179.9 15.6 L180.6 14.7 L181.3 15.3 L182.0 14.7 L182.7 16.2 L183.4 15.8 L184.1 15.7 L184.8 15.4 L185.5 16.8 L186.2 16.0 L186.9 16.5 L187.6 16.5 L188.3 16.7 L189.0 16.6 L189.7 15.7 L190.4 16.1 L191.1 17.4 L191.8 16.6 L192.5 17.2 L193.2 17.1 L193.9 17.8 L194.6 17.5 L195.3 17.6 L196.0 18.1 L196.7 17.8 L197.4 18.0 L198.1 18.1 L198.8 18.2 L199.5 18.4 L200.2 18.5 L200.9 18.7 L201.6 18.7 L202.0 18.8Z" fill="#3be4cc"/>
<path d="M0.0 18.8 L0.0 15.4 L0.7 13.1 L1.4 12.8 L2.1 13.8 L2.8 12.4 L3.5 13.3 L4.2 11.6 L4.9 12.4 L5.6 13.8 L6.3 13.0 L7.0 13.5 L7.7 12.8 L8.4 12.9 L9.1 14.1 L9.8 12.7 L10.5 13.0 L11.2 13.9 L11.9 14.0 L12.6 11.6 L13.3 12.2 L14.0 13.5 L14.7 12.6 L15.4 13.2 L16.1 11.2 L16.8 11.1 L17.5 13.8 L18.2 12.1 L18.9 13.6 L19.6 12.7 L20.3 11.7 L21.0 12.5 L21.7 13.3 L22.4 13.0 L23.1 13.4 L23.8 12.0 L24.5 12.4 L25.2 11.8 L25.9 12.0 L26.6 13.3 L27.3 14.4 L28.0 11.9 L28.7 13.1 L29.4 13.4 L30.1 12.4 L30.8 13.2 L31.5 12.5 L32.2 12.3 L32.9 12.0 L33.6 11.5 L34.3 12.9 L35.0 13.6 L35.7 12.9 L36.4 14.1 L37.1 13.4 L37.8 11.5 L38.5 12.8 L39.2 11.5 L39.9 11.5 L40.6 12.3 L41.3 11.9 L42.0 12.4 L42.7 13.7 L43.4 12.6 L44.1 11.3 L44.8 13.0 L45.5 12.0 L46.2 14.1 L46.9 14.4 L47.6 13.4 L48.3 12.5 L49.0 11.9 L49.7 9.9 L50.4 12.1 L51.1 12.6 L51.8 14.2 L52.5 11.7 L53.2 12.8 L53.9 13.0 L54.6 13.6 L55.3 13.1 L56.0 13.2 L56.7 12.2 L57.4 13.8 L58.1 10.6 L58.8 10.4 L59.5 10.3 L60.2 13.7 L60.9 13.2 L61.6 13.5 L62.3 12.5 L63.0 13.7 L63.7 14.0 L64.4 12.6 L65.1 12.8 L65.8 12.6 L66.5 11.6 L67.2 12.5 L67.9 12.7 L68.6 12.1 L69.3 12.4 L70.0 13.3 L70.7 13.0 L71.4 14.3 L72.1 10.8 L72.8 11.3 L73.5 12.1 L74.2 12.9 L74.9 11.5 L75.6 12.2 L76.3 11.8 L77.0 11.2 L77.7 13.3 L78.4 13.6 L79.1 12.7 L79.8 12.8 L80.5 12.1 L81.2 14.0 L81.9 13.0 L82.6 12.5 L83.3 10.0 L84.0 14.0 L84.7 13.0 L85.4 11.2 L86.1 12.5 L86.8 10.9 L87.5 13.1 L88.2 12.2 L88.9 14.4 L89.6 13.4 L90.3 13.8 L91.0 13.5 L91.7 12.3 L92.4 14.2 L93.1 12.7 L93.8 11.6 L94.5 12.5 L95.2 12.0 L95.9 13.7 L96.6 13.6 L97.3 13.4 L98.0 12.5 L98.7 14.4 L99.4 13.0 L100.1 13.2 L100.8 13.6 L101.5 11.2 L102.2 12.9 L102.9 14.0 L103.6 14.2 L104.3 11.2 L105.0 11.7 L105.7 11.7 L106.4 13.0 L107.1 12.2 L107.8 12.0 L108.5 12.9 L109.2 13.1 L109.9 11.9 L110.6 12.1 L111.3 12.7 L112.0 14.1 L112.7 12.6 L113.4 11.6 L114.1 14.2 L114.8 11.7 L115.5 10.7 L116.2 12.6 L116.9 12.8 L117.6 12.8 L118.3 12.2 L119.0 12.2 L119.7 11.5 L120.4 12.4 L121.1 11.7 L121.8 11.6 L122.5 12.2 L123.2 13.4 L123.9 13.4 L124.6 12.9 L125.3 11.9 L126.0 11.5 L126.7 12.1 L127.4 10.8 L128.1 14.5 L128.8 12.9 L129.5 12.4 L130.2 11.8 L130.9 13.1 L131.6 12.5 L132.3 12.1 L133.0 11.8 L133.7 13.0 L134.4 13.7 L135.1 10.8 L135.8 12.4 L136.5 12.8 L137.2 12.7 L137.9 12.3 L138.6 11.7 L139.3 13.7 L140.0 10.7 L140.7 13.0 L141.4 13.9 L142.1 12.0 L142.8 14.7 L143.5 13.5 L144.2 12.7 L144.9 13.4 L145.6 13.0 L146.3 14.8 L147.0 14.2 L147.7 12.7 L148.4 14.0 L149.1 15.1 L149.8 14.8 L150.5 14.8 L151.2 13.4 L151.9 13.4 L152.6 13.2 L153.3 13.9 L154.0 14.7 L154.7 14.8 L155.4 13.9 L156.1 14.1 L156.8 13.9 L157.5 14.0 L158.2 15.0 L158.9 15.9 L159.6 15.0 L160.3 15.3 L161.0 14.5 L161.7 15.0 L162.4 14.7 L163.1 15.4 L163.8 15.1 L164.5 15.6 L165.2 15.6 L165.9 16.3 L166.6 14.4 L167.3 14.1 L168.0 15.6 L168.7 15.6 L169.4 16.4 L170.1 15.5 L170.8 15.6 L171.5 15.4 L172.2 16.3 L172.9 16.1 L173.6 16.0 L174.3 16.0 L175.0 16.0 L175.7 16.5 L176.4 16.1 L177.1 16.0 L177.8 16.7 L178.5 16.5 L179.2 16.3 L179.9 16.9 L180.6 16.6 L181.3 16.6 L182.0 17.0 L182.7 16.7 L183.4 17.2 L184.1 17.2 L184.8 17.2 L185.5 17.4 L186.2 17.2 L186.9 17.2 L187.6 17.0 L188.3 17.3 L189.0 17.7 L189.7 17.6 L190.4 17.6 L191.1 17.6 L191.8 17.5 L192.5 18.1 L193.2 18.0 L193.9 18.1 L194.6 18.1 L195.3 18.2 L196.0 18.3 L196.7 18.3 L197.4 18.3 L198.1 18.3 L198.8 18.5 L199.5 18.5 L200.2 18.6 L200.9 18.7 L201.6 18.8 L202.0 18.8Z" fill="#8cefe0"/>
<rect x="0" y="17.4" width="202" height="1.4" fill="#90f2e4"/>
</svg>
<div class="a" style="left:5.5px;top:6.8px;font-size:7px;color:#f4fffd;white-space:nowrap;letter-spacing:0px;opacity:.85">Atmosphere_Chill_Beat.mp3</div>
</div>
<div class="a" style="left:58.2px;top:246px;width:1px;height:190px;background:#d8506a"></div>
<svg style="left:0;top:0" width="1" height="1"><path d="M55.6 239.3q0-1 1-1h4.4q1 0 1 1v5.3l-3.2 2.6-3.2-2.6z" fill="#f0485e"/></svg>
<div class="a" style="left:29.5px;top:434px;width:603px;height:3.5px;border-radius:1px;background:#585c70"></div>
<div class="a" style="left:763.5px;top:238px;width:36.5px;height:212px;background:#141519"></div>
<svg style="left:0;top:0" width="1" height="1"><g fill="#6e7184"><rect x="783" y="260.5" width="4.6" height="1.3"/><rect x="791" y="260.5" width="4.6" height="1.3"/><rect x="783" y="263.1" width="4.6" height="1.3"/><rect x="791" y="263.1" width="4.6" height="1.3"/><rect x="783" y="265.7" width="4.6" height="1.3"/><rect x="791" y="265.7" width="4.6" height="1.3"/><rect x="783" y="268.3" width="4.6" height="1.3"/><rect x="791" y="268.3" width="4.6" height="1.3"/><rect x="783" y="270.9" width="4.6" height="1.3"/><rect x="791" y="270.9" width="4.6" height="1.3"/><rect x="783" y="273.5" width="4.6" height="1.3"/><rect x="791" y="273.5" width="4.6" height="1.3"/><rect x="783" y="276.1" width="4.6" height="1.3"/><rect x="791" y="276.1" width="4.6" height="1.3"/><rect x="783" y="278.7" width="4.6" height="1.3"/><rect x="791" y="278.7" width="4.6" height="1.3"/><rect x="783" y="281.3" width="4.6" height="1.3"/><rect x="791" y="281.3" width="4.6" height="1.3"/><rect x="783" y="283.9" width="4.6" height="1.3"/><rect x="791" y="283.9" width="4.6" height="1.3"/><rect x="783" y="286.5" width="4.6" height="1.3"/><rect x="791" y="286.5" width="4.6" height="1.3"/><rect x="783" y="289.1" width="4.6" height="1.3"/><rect x="791" y="289.1" width="4.6" height="1.3"/><rect x="783" y="291.7" width="4.6" height="1.3"/><rect x="791" y="291.7" width="4.6" height="1.3"/><rect x="783" y="294.3" width="4.6" height="1.3"/><rect x="791" y="294.3" width="4.6" height="1.3"/><rect x="783" y="296.9" width="4.6" height="1.3"/><rect x="791" y="296.9" width="4.6" height="1.3"/><rect x="783" y="299.5" width="4.6" height="1.3"/><rect x="791" y="299.5" width="4.6" height="1.3"/><rect x="783" y="302.1" width="4.6" height="1.3"/><rect x="791" y="302.1" width="4.6" height="1.3"/><rect x="783" y="304.7" width="4.6" height="1.3"/><rect x="791" y="304.7" width="4.6" height="1.3"/><rect x="783" y="307.3" width="4.6" height="1.3"/><rect x="791" y="307.3" width="4.6" height="1.3"/><rect x="783" y="309.9" width="4.6" height="1.3"/><rect x="791" y="309.9" width="4.6" height="1.3"/><rect x="783" y="312.5" width="4.6" height="1.3"/><rect x="791" y="312.5" width="4.6" height="1.3"/><rect x="783" y="315.1" width="4.6" height="1.3"/><rect x="791" y="315.1" width="4.6" height="1.3"/><rect x="783" y="317.7" width="4.6" height="1.3"/><rect x="791" y="317.7" width="4.6" height="1.3"/><rect x="783" y="320.3" width="4.6" height="1.3"/><rect x="791" y="320.3" width="4.6" height="1.3"/><rect x="783" y="322.9" width="4.6" height="1.3"/><rect x="791" y="322.9" width="4.6" height="1.3"/><rect x="783" y="325.5" width="4.6" height="1.3"/><rect x="791" y="325.5" width="4.6" height="1.3"/><rect x="783" y="328.1" width="4.6" height="1.3"/><rect x="791" y="328.1" width="4.6" height="1.3"/><rect x="783" y="330.7" width="4.6" height="1.3"/><rect x="791" y="330.7" width="4.6" height="1.3"/><rect x="783" y="333.3" width="4.6" height="1.3"/><rect x="791" y="333.3" width="4.6" height="1.3"/><rect x="783" y="335.9" width="4.6" height="1.3"/><rect x="791" y="335.9" width="4.6" height="1.3"/><rect x="783" y="338.5" width="4.6" height="1.3"/><rect x="791" y="338.5" width="4.6" height="1.3"/><rect x="783" y="341.1" width="4.6" height="1.3"/><rect x="791" y="341.1" width="4.6" height="1.3"/><rect x="783" y="343.7" width="4.6" height="1.3"/><rect x="791" y="343.7" width="4.6" height="1.3"/><rect x="783" y="346.3" width="4.6" height="1.3"/><rect x="791" y="346.3" width="4.6" height="1.3"/><rect x="783" y="348.9" width="4.6" height="1.3"/><rect x="791" y="348.9" width="4.6" height="1.3"/><rect x="783" y="351.5" width="4.6" height="1.3"/><rect x="791" y="351.5" width="4.6" height="1.3"/><rect x="783" y="354.1" width="4.6" height="1.3"/><rect x="791" y="354.1" width="4.6" height="1.3"/><rect x="783" y="356.7" width="4.6" height="1.3"/><rect x="791" y="356.7" width="4.6" height="1.3"/><rect x="783" y="359.3" width="4.6" height="1.3"/><rect x="791" y="359.3" width="4.6" height="1.3"/><rect x="783" y="361.9" width="4.6" height="1.3"/><rect x="791" y="361.9" width="4.6" height="1.3"/><rect x="783" y="364.5" width="4.6" height="1.3"/><rect x="791" y="364.5" width="4.6" height="1.3"/><rect x="783" y="367.1" width="4.6" height="1.3"/><rect x="791" y="367.1" width="4.6" height="1.3"/><rect x="783" y="369.7" width="4.6" height="1.3"/><rect x="791" y="369.7" width="4.6" height="1.3"/><rect x="783" y="372.3" width="4.6" height="1.3"/><rect x="791" y="372.3" width="4.6" height="1.3"/><rect x="783" y="374.9" width="4.6" height="1.3"/><rect x="791" y="374.9" width="4.6" height="1.3"/><rect x="783" y="377.5" width="4.6" height="1.3"/><rect x="791" y="377.5" width="4.6" height="1.3"/><rect x="783" y="380.1" width="4.6" height="1.3"/><rect x="791" y="380.1" width="4.6" height="1.3"/><rect x="783" y="382.7" width="4.6" height="1.3"/><rect x="791" y="382.7" width="4.6" height="1.3"/><rect x="783" y="385.3" width="4.6" height="1.3"/><rect x="791" y="385.3" width="4.6" height="1.3"/><rect x="783" y="387.9" width="4.6" height="1.3"/><rect x="791" y="387.9" width="4.6" height="1.3"/><rect x="783" y="390.5" width="4.6" height="1.3"/><rect x="791" y="390.5" width="4.6" height="1.3"/><rect x="783" y="393.1" width="4.6" height="1.3"/><rect x="791" y="393.1" width="4.6" height="1.3"/><rect x="783" y="395.7" width="4.6" height="1.3"/><rect x="791" y="395.7" width="4.6" height="1.3"/><rect x="783" y="398.3" width="4.6" height="1.3"/><rect x="791" y="398.3" width="4.6" height="1.3"/><rect x="783" y="400.9" width="4.6" height="1.3"/><rect x="791" y="400.9" width="4.6" height="1.3"/><rect x="783" y="403.5" width="4.6" height="1.3"/><rect x="791" y="403.5" width="4.6" height="1.3"/><rect x="783" y="406.1" width="4.6" height="1.3"/><rect x="791" y="406.1" width="4.6" height="1.3"/><rect x="783" y="408.7" width="4.6" height="1.3"/><rect x="791" y="408.7" width="4.6" height="1.3"/><rect x="783" y="411.3" width="4.6" height="1.3"/><rect x="791" y="411.3" width="4.6" height="1.3"/><rect x="783" y="413.9" width="4.6" height="1.3"/><rect x="791" y="413.9" width="4.6" height="1.3"/><rect x="783" y="416.5" width="4.6" height="1.3"/><rect x="791" y="416.5" width="4.6" height="1.3"/><rect x="783" y="419.1" width="4.6" height="1.3"/><rect x="791" y="419.1" width="4.6" height="1.3"/><rect x="783" y="421.7" width="4.6" height="1.3"/><rect x="791" y="421.7" width="4.6" height="1.3"/><rect x="783" y="424.3" width="4.6" height="1.3"/><rect x="791" y="424.3" width="4.6" height="1.3"/><rect x="783" y="426.9" width="4.6" height="1.3"/><rect x="791" y="426.9" width="4.6" height="1.3"/><rect x="783" y="429.5" width="4.6" height="1.3"/><rect x="791" y="429.5" width="4.6" height="1.3"/></g><g fill="#8a8da0"><rect x="783.5" y="255.5" width="3.6" height="1.3"/><rect x="791.5" y="255.5" width="3.6" height="1.3"/></g><g fill="#5a5c66"><rect x="785" y="440" width="10.5" height="8.5"/></g><g fill="#8a8c98"><rect x="786" y="441" width="4" height="6.8"/><rect x="790.8" y="441" width="4" height="6.8"/></g><g fill="#5e6068"><rect x="779" y="261.5" width="2" height="0.8"/><rect x="779" y="284.5" width="2" height="0.8"/><rect x="779" y="308.0" width="2" height="0.8"/><rect x="779" y="331.0" width="2" height="0.8"/><rect x="779" y="354.0" width="2" height="0.8"/><rect x="779" y="381.0" width="2" height="0.8"/><rect x="779" y="407.5" width="2" height="0.8"/></g></svg>
<div class="db" style="top:258.5px">0</div>
<div class="db" style="top:281.5px">-5</div>
<div class="db" style="top:305px">-10</div>
<div class="db" style="top:328px">-15</div>
<div class="db" style="top:351px">-20</div>
<div class="db" style="top:378px">-30</div>
<div class="db" style="top:404.5px">-40</div>
<div class="a" style="left:783.5px;top:431px;font-size:5.5px;color:#8a8c98">L</div>
<div class="a" style="left:791.5px;top:431px;font-size:5.5px;color:#8a8c98">R</div>
<div class="a" style="left:6px;top:439.8px;font-size:7.4px;font-weight:bold;color:#c5c6ca;white-space:nowrap;letter-spacing:-0.42px">Project length: 01:00</div>
</body></html>
